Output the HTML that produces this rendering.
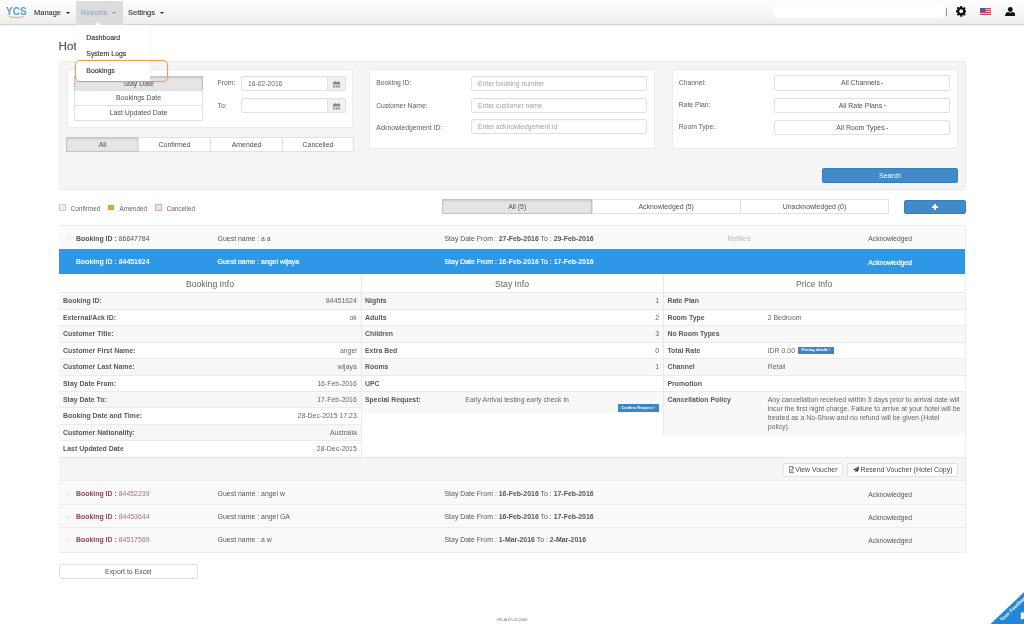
<!DOCTYPE html>
<html lang="en">
<head>
<meta charset="utf-8">
<title>YCS - Hotel Bookings</title>
<style>
*{box-sizing:border-box;margin:0;padding:0}
html,body{width:1024px;height:624px;overflow:hidden;background:#fff}
body{font-family:"Liberation Sans",Arial,sans-serif;font-size:6.93px;color:#555;position:relative;line-height:1.3}
#wrap{position:absolute;left:0;top:0;width:1024px;height:624px;will-change:transform}
.abs{position:absolute}
b{font-weight:bold}
/* NAV */
#nav{position:absolute;left:0;top:0;width:1024px;height:25px;background:linear-gradient(#fefefe,#f9f9f9 40%,#ededed);border-bottom:1px solid #d4d4d4;box-shadow:0 1px 2px rgba(0,0,0,.08)}
#logo{position:absolute;left:6px;top:5.7px;font-size:10px;font-weight:bold;color:#5f9dc4;letter-spacing:.1px;line-height:12px}
#logo svg{position:absolute;left:3px;top:10.2px}
.navi{position:absolute;top:1px;height:24px;font-size:7.47px;color:#333;line-height:23px;white-space:nowrap;-webkit-text-stroke:.1px}
.caret{display:inline-block;width:0;height:0;border-left:2.2px solid transparent;border-right:2.2px solid transparent;border-top:2.4px solid #222;vertical-align:middle;margin-left:5px;position:relative;top:-.5px}
#rep{left:76px;width:46.7px;background:#dcdcdc;color:#8fa6d6;padding-left:5px}
#rep .caret{border-top-color:#6f9fd6}
#srch{position:absolute;left:774px;top:3px;width:169.5px;height:15px;background:#fff;border-radius:1px}
#sep{position:absolute;left:946px;top:8px;width:1px;height:7.5px;background:#999}
/* dropdown */
#dd{position:absolute;left:76px;top:25px;width:73.6px;height:55.5px;background:#fff;box-shadow:0 1px 2px rgba(0,0,0,.06);z-index:5}
#dd div{position:absolute;left:10.3px;font-size:6.93px;color:#333;line-height:9px;-webkit-text-stroke:.12px #333}
#hl{position:absolute;left:75px;top:60.3px;width:92.8px;height:22px;border:1px solid #e8a04a;border-radius:5px;z-index:6;box-shadow:0 0 1.5px rgba(232,160,74,.6)}
#tri{position:absolute;left:94.5px;top:22px;width:0;height:0;border-left:3px solid transparent;border-right:3px solid transparent;border-bottom:3px solid #fff;z-index:6}
h3{position:absolute;left:58.6px;top:38.6px;font-size:11.7px;font-weight:normal;color:#5e5e5e;line-height:14px;white-space:nowrap;-webkit-text-stroke:.25px #5e5e5e}
/* search well */
#well{position:absolute;left:58.5px;top:61.3px;width:907.8px;height:129px;background:#f5f5f5;border:1px solid #ececec;border-radius:2px}
.pan{position:absolute;top:69px;background:#fff;border:1px solid #ececec;border-radius:1.5px}
.btn{position:absolute;background:#fff;border:1px solid #e0e0e0;text-align:center;color:#505050;font-size:6.93px;white-space:nowrap}
.act{background:#e5e5e5;border-color:#c4c4c4;box-shadow:inset 0 1px 2px rgba(0,0,0,.13)}
.lbl{position:absolute;font-size:6.8px;color:#606060;white-space:nowrap;line-height:9px}
.inp{position:absolute;background:#fff;border:1px solid #e0e0e0;border-radius:2px;height:15.2px;font-size:6.72px;line-height:13.4px;padding-left:5.8px;color:#666;white-space:nowrap;box-shadow:inset 0 .5px .5px rgba(0,0,0,.06)}
.ph{color:#a2a2a2}
.addon{position:absolute;background:#f0f0f0;border:1px solid #e0e0e0;border-radius:0 2px 2px 0;width:18.5px;height:15.2px}
.addon svg{position:absolute;left:5.2px;top:3.6px}
.c2{display:inline-block;width:0;height:0;border-left:1.6px solid transparent;border-right:1.6px solid transparent;border-top:1.8px solid #333;vertical-align:middle;margin-left:1.5px}
.pri{background:#428bca;border-color:#357ebd;color:#fff;border-radius:2px}
/* legend */
.lg{position:absolute;top:204.2px;width:7.4px;height:6.5px;border:1px solid #ccc}
.lgt{position:absolute;top:203.7px;font-size:6.45px;color:#666;line-height:9px}
/* list */
#list{position:absolute;left:58.5px;top:225.3px;width:907.3px;height:327.7px;border:1px solid #ececec;background:#fafafa;border-radius:1px}
.row{position:absolute;left:59px;width:906.3px;height:23.4px;background:#fafafa;border-top:1px solid #ebebeb;line-height:9px;white-space:nowrap}
.row span{position:absolute;top:7.9px}
.row .chev{left:8.2px;top:7.5px;color:#dcdcdc;font-size:6.5px}
.row .id{left:17px}
.row .gn{left:158.6px}
.row .sd{left:385.5px}
.row .st{left:809.3px;font-size:6.72px;top:8.5px}
.row b{color:#555}
.red .id b{color:#914257}
.r5 span{margin-top:-.9px}
.red .id{color:#a8707f}
#sel{background:#2e98e6;border-top-color:#2e98e6;color:#fff;height:25.2px}
#sel b{color:#fff}
/* detail */
#det{position:absolute;left:59px;top:274.2px;width:906.3px;height:183.2px;background:#fff}
.hd{position:absolute;top:4.6px;font-size:8.65px;color:#666;line-height:10px;text-align:center}
.tr{position:absolute;height:16.45px;border-top:1px solid #ebebeb;line-height:9px;white-space:nowrap}
.tr.o{background:#f8f8f8}
.tr b{position:absolute;left:4px;top:3px;color:#585858}
.tr i{position:absolute;right:4.2px;top:3px;font-style:normal;color:#666}
.tr u{position:absolute;left:104.3px;top:3px;text-decoration:none;color:#666}
.vl{position:absolute;top:0;width:1px;background:#e9e9e9;z-index:2}
.mini{position:absolute;background:#3c86c6;color:#fff;font-size:3.9px;font-weight:bold;line-height:7.4px;text-align:center;border-radius:.5px;white-space:nowrap}
#foot{position:absolute;left:59px;top:457.4px;width:906.3px;height:23.2px;background:#f5f5f5;border-top:1px solid #e6e6e6}
.vb{top:463px;height:14px;line-height:12.4px;border-radius:2px;border-color:#e2e2e2;color:#484848}
</style>
</head>
<body>
<div id="wrap">

<!-- NAV -->
<div id="nav">
  <div id="logo">YCS<svg width="15" height="3" viewBox="0 0 15 3"><path d="M.5 .5 C4 2.100 10 2.100 14 .6" fill="none" stroke="#e9a23b" stroke-width=".9" stroke-linecap="round"/></svg></div>
  <div class="navi" style="left:34px">Manage<span class="caret"></span></div>
  <div class="navi" id="rep">Reports<span class="caret"></span></div>
  <div class="navi" style="left:128px">Settings<span class="caret"></span></div>
  <div id="srch"></div>
  <div id="sep"></div>
  <svg class="abs" style="left:955.6px;top:6.4px" width="10.4" height="10.4" viewBox="0 0 20 20"><path fill="#111" d="M8.3 0h3.4l.5 2.7 1.7.7L16.200 1.800l2.400 2.400-1.600 2.300.7 1.700 2.700.5v3.400l-2.700.5-.7 1.700 1.600 2.300-2.400 2.400-2.300-1.600-1.700.7-.5 2.700H8.300l-.5-2.700-1.700-.7-2.300 1.600-2.400-2.400 1.600-2.300-.7-1.700L-.4 11.700V8.300l2.700-.5.7-1.700L1.400 3.800 3.800 1.400l2.300 1.600 1.700-.7z"/><circle cx="10" cy="10" r="3.6" fill="#f3f3f3"/></svg>
  <svg class="abs" style="left:980px;top:7.6px" width="11" height="7.2" viewBox="0 0 22 14"><rect width="22" height="14" fill="#e9c9d0"/><g fill="#c2415a"><rect y="0" width="22" height="2"/><rect y="4" width="22" height="2"/><rect y="8" width="22" height="2"/><rect y="12" width="22" height="2"/></g><rect width="11" height="8" fill="#4d5aa6"/></svg>
  <svg class="abs" style="left:1004.6px;top:6.8px" width="10.6" height="9.6" viewBox="0 0 20 18"><circle cx="10" cy="4.6" r="4.6" fill="#111"/><path fill="#111" d="M0 18c0-6 3-8.500 6-8.500 1.200 1 2.500 1.500 4 1.500s2.800-.5 4-1.500c3 0 6 2.500 6 8.500z"/></svg>
</div>
<div id="tri"></div>

<h3>Hotel Bookings</h3>

<!-- SEARCH WELL -->
<div id="well"></div>

<div class="pan" style="left:66.6px;width:286.4px;height:59px"></div>
<div class="btn act" style="left:74.4px;top:75.5px;width:128.4px;height:15.6px;line-height:13.8px">Stay Date</div>
<div class="btn" style="left:74.4px;top:90.4px;width:128.4px;height:15.6px;line-height:13.8px">Bookings Date</div>
<div class="btn" style="left:74.4px;top:105.2px;width:128.4px;height:15.4px;line-height:13.6px">Last Updated Date</div>
<div class="lbl" style="left:217.6px;top:77.9px">From:</div>
<div class="lbl" style="left:217.6px;top:100.5px">To:</div>
<div class="inp" style="left:241.2px;top:76.2px;width:87px;border-radius:2px 0 0 2px">16-02-2016</div>
<div class="addon" style="left:327.2px;top:76.2px"><svg width="7.2" height="7.6" viewBox="0 0 14 15"><path fill="#7a7a7a" d="M0 2.500h14V15H0zM1.200 5.800v8h11.600v-8z"/><path fill="#7a7a7a" d="M3 0h2v4H3zM9 0h2v4H9zM2.500 7.200h2.400v2.400H2.500zM5.800 7.200h2.400v2.400H5.800zM9.100 7.200h2.400v2.400H9.100zM2.500 10.400h2.400v2.400H2.500zM5.800 10.400h2.400v2.400H5.800zM9.100 10.400h2.400v2.400H9.100z"/></svg></div>
<div class="inp" style="left:241.2px;top:98.3px;width:87px;border-radius:2px 0 0 2px"></div>
<div class="addon" style="left:327.2px;top:98.3px"><svg width="7.2" height="7.600" viewBox="0 0 14 15"><path fill="#7a7a7a" d="M0 2.500h14V15H0zM1.200 5.800v8h11.600v-8z"/><path fill="#7a7a7a" d="M3 0h2v4H3zM9 0h2v4H9zM2.500 7.200h2.400v2.400H2.500zM5.800 7.200h2.400v2.400H5.800zM9.100 7.200h2.400v2.400H9.100zM2.500 10.400h2.400v2.400H2.500zM5.800 10.400h2.400v2.400H5.800zM9.100 10.400h2.400v2.400H9.100z"/></svg></div>

<div class="btn act" style="left:66.2px;top:137px;width:72.7px;height:14.8px;line-height:13px">All</div>
<div class="btn" style="left:138.2px;top:137px;width:72.7px;height:14.8px;line-height:13px">Confirmed</div>
<div class="btn" style="left:210.2px;top:137px;width:72.7px;height:14.8px;line-height:13px">Amended</div>
<div class="btn" style="left:282.2px;top:137px;width:71.6px;height:14.8px;line-height:13px">Cancelled</div>

<div class="pan" style="left:368.8px;width:286.5px;height:79.6px"></div>
<div class="lbl" style="left:376.2px;top:78.4px">Booking ID:</div>
<div class="lbl" style="left:376.2px;top:100.5px">Customer Name:</div>
<div class="lbl" style="left:376.2px;top:122.6px">Acknowledgement ID:</div>
<div class="inp ph" style="left:471.3px;top:75.5px;width:176.2px">Enter booking number</div>
<div class="inp ph" style="left:471.3px;top:97.7px;width:176.2px">Enter customer name</div>
<div class="inp ph" style="left:471.3px;top:119.3px;width:176.2px">Enter acknowledgement id</div>

<div class="pan" style="left:671.8px;width:286.2px;height:79.8px"></div>
<div class="lbl" style="left:678.7px;top:78.2px">Channel:</div>
<div class="lbl" style="left:678.7px;top:100.4px">Rate Plan:</div>
<div class="lbl" style="left:678.7px;top:122.4px">Room Type:</div>
<div class="btn" style="left:774px;top:75.4px;width:176.4px;height:15.3px;line-height:13.5px;border-radius:2px">All Channels<span class="c2"></span></div>
<div class="btn" style="left:774px;top:97.7px;width:176.4px;height:15.1px;line-height:13.3px;border-radius:2px">All Rate Plans<span class="c2"></span></div>
<div class="btn" style="left:774px;top:120.1px;width:176.4px;height:15.1px;line-height:13.3px;border-radius:2px">All Room Types<span class="c2"></span></div>

<div class="btn pri" style="left:821.6px;top:167.6px;width:136.8px;height:15.3px;line-height:13.5px">Search</div>

<!-- LEGEND + TABS -->
<div class="lg" style="left:58.7px;background:#ecefec;border-color:#c9cfc9"></div>
<div class="lgt" style="left:70.6px">Confirmed</div>
<div class="lg" style="left:107.7px;width:6.6px;height:5.6px;top:204.6px;background:#eaa43c;border-color:#e29a33"></div>
<div class="lgt" style="left:119.6px">Amended</div>
<div class="lg" style="left:154.5px;background:#f7dfe4;border-color:#e0a9b6"></div>
<div class="lgt" style="left:166.5px">Cancelled</div>

<div class="btn act" style="left:442.2px;top:199.4px;width:150px;height:15px;line-height:14px">All (5)</div>
<div class="btn" style="left:591.6px;top:199.4px;width:149.2px;height:15px;line-height:14px">Acknowledged (5)</div>
<div class="btn" style="left:740.2px;top:199.4px;width:148.6px;height:15px;line-height:14px">Unacknowledged (0)</div>
<div class="btn pri" style="left:904px;top:199.7px;width:61.8px;height:14.6px;line-height:12px;font-size:0"><svg width="6" height="6" viewBox="0 0 6 6" style="position:absolute;left:27.4px;top:3.5px"><path d="M2.100 0h1.800v2.100H6v1.800H3.900V6H2.100V3.900H0V2.100h2.100z" fill="#fff"/></svg></div>

<!-- LIST -->
<div id="list"></div>
<div class="row" style="top:225.8px;border-top:0"><span class="chev">&gt;</span><span class="id"><b>Booking ID :</b> 86647784</span><span class="gn">Guest name : a a</span><span class="sd">Stay Date From : <b>27-Feb-2016</b> To : <b>29-Feb-2016</b></span><span style="left:668.4px;top:8.7px;color:#b9b9b9;font-size:6.93px">Refilled</span><span class="st">Acknowledged</span></div>
<div class="row" id="sel" style="top:249.1px"><span class="chev" style="color:#6a78d8;font-size:4px;top:7px">&#9662;</span><span class="id" style="top:7.3px"><b>Booking ID :</b> <b>84451624</b></span><span class="gn" style="top:7.3px"><b style="font-weight:normal;-webkit-text-stroke:.2px #fff">Guest name : angel wijaya</b></span><span class="sd" style="top:7.3px"><b style="font-weight:normal;-webkit-text-stroke:.2px #fff">Stay Date From : </b><b>16-Feb-2016</b><b style="font-weight:normal;-webkit-text-stroke:.2px #fff"> To : </b><b>17-Feb-2016</b></span><span class="st" style="top:8.1px"><b style="font-weight:normal;-webkit-text-stroke:.2px #fff">Acknowledged</b></span></div>

<div id="det">
  <div class="hd" style="left:0;width:302px">Booking Info</div>
  <div class="hd" style="left:302px;width:302px">Stay Info</div>
  <div class="hd" style="left:604.600px;width:301px">Price Info</div>
  <div class="vl" style="left:302px;height:183px"></div>
  <div class="vl" style="left:604.400px;height:160.8px"></div>

  <!-- Booking info -->
  <div class="tr o" style="left:0;top:18.1px;width:302px"><b>Booking ID:</b><i>84451624</i></div>
  <div class="tr" style="left:0;top:34.55px;width:302px"><b>External/Ack ID:</b><i>ok</i></div>
  <div class="tr o" style="left:0;top:51px;width:302px"><b>Customer Title:</b></div>
  <div class="tr" style="left:0;top:67.45px;width:302px"><b>Customer First Name:</b><i>angel</i></div>
  <div class="tr o" style="left:0;top:83.9px;width:302px"><b>Customer Last Name:</b><i>wijaya</i></div>
  <div class="tr" style="left:0;top:100.35px;width:302px"><b>Stay Date From:</b><i>16-Feb-2016</i></div>
  <div class="tr o" style="left:0;top:116.8px;width:302px"><b>Stay Date To:</b><i>17-Feb-2016</i></div>
  <div class="tr" style="left:0;top:133.25px;width:302px"><b>Booking Date and Time:</b><i>28-Dec-2015 17:23</i></div>
  <div class="tr o" style="left:0;top:149.7px;width:302px"><b>Customer Nationality:</b><i>Australia</i></div>
  <div class="tr" style="left:0;top:166.15px;width:302px;height:17px"><b>Last Updated Date</b><i>28-Dec-2015</i></div>

  <!-- Stay info -->
  <div class="tr o" style="left:302px;top:18.1px;width:302.4px"><b>Nights</b><i>1</i></div>
  <div class="tr" style="left:302px;top:34.55px;width:302.4px"><b>Adults</b><i>2</i></div>
  <div class="tr o" style="left:302px;top:51px;width:302.4px"><b>Children</b><i>3</i></div>
  <div class="tr" style="left:302px;top:67.45px;width:302.4px"><b>Extra Bed</b><i>0</i></div>
  <div class="tr o" style="left:302px;top:83.9px;width:302.4px"><b>Rooms</b><i>1</i></div>
  <div class="tr" style="left:302px;top:100.35px;width:302.4px"><b>UPC</b></div>
  <div class="tr o" style="left:302px;top:116.8px;width:302.4px;height:22px"><b>Special Request:</b><u>Early Arrival testing early check in</u></div>
  <div class="mini" style="left:558.5px;top:129.800px;width:41.5px;height:7.6px">Confirm Request &rsaquo;</div>

  <!-- Price info -->
  <div class="tr o" style="left:604.400px;top:18.1px;width:301.900px"><b>Rate Plan</b></div>
  <div class="tr" style="left:604.400px;top:34.55px;width:301.900px"><b>Room Type</b><u>2 Bedroom</u></div>
  <div class="tr o" style="left:604.400px;top:51px;width:301.900px"><b>No Room Types</b></div>
  <div class="tr" style="left:604.400px;top:67.45px;width:301.900px"><b>Total Rate</b><u>IDR 0.00</u></div>
  <div class="mini" style="left:738.600px;top:73.2px;width:36.6px;height:6.8px;line-height:6.6px">Pricing details &rsaquo;</div>
  <div class="tr o" style="left:604.400px;top:83.9px;width:301.900px"><b>Channel</b><u>Retail</u></div>
  <div class="tr" style="left:604.400px;top:100.35px;width:301.900px"><b>Promotion</b></div>
  <div class="tr o" style="left:604.400px;top:116.8px;width:301.900px;height:43.8px;white-space:normal"><b>Cancellation Policy</b><u style="width:200px;line-height:9px;top:3.3px;white-space:nowrap">Any cancellation received within 3 days prior to arrival date will<br>incur the first night charge. Failure to arrive at your hotel will be<br>treated as a No-Show and no refund will be given (Hotel<br>policy).</u></div>
</div>

<div id="foot"></div>
<div class="btn vb" style="left:782.6px;width:60.8px"><svg width="5.9" height="7" viewBox="0 0 11 13" style="vertical-align:-1.3px;margin-right:.8px"><path d="M.7 .7h6l3.600 3.600v8H.7z" fill="none" stroke="#444" stroke-width="1.3"/><path d="M6.500 .7v3.800h3.800M2.800 7h5.400M2.800 9.500h5.400" fill="none" stroke="#444" stroke-width="1.100"/></svg>View Voucher</div>
<div class="btn vb" style="left:847px;width:111.2px"><svg width="6.6" height="6.600" viewBox="0 0 13 13" style="vertical-align:-1px;margin-right:1.200px"><path fill="#333" d="M13 0 0 7.200l3.600 1.500zM13 0 4.600 9.300V13l2.300-2.800 2.900 1.300z"/></svg>Resend Voucher (Hotel Copy)</div>

<div class="row red" style="top:480.4px"><span class="chev">&gt;</span><span class="id"><b>Booking ID :</b> 84452239</span><span class="gn">Guest name : angel w</span><span class="sd">Stay Date From : <b>16-Feb-2016</b> To : <b>17-Feb-2016</b></span><span class="st">Acknowledged</span></div>
<div class="row red" style="top:503.6px"><span class="chev">&gt;</span><span class="id"><b>Booking ID :</b> 84453644</span><span class="gn">Guest name : angel GA</span><span class="sd">Stay Date From : <b>16-Feb-2016</b> To : <b>17-Feb-2016</b></span><span class="st">Acknowledged</span></div>
<div class="row red r5" style="top:527.2px;height:25.3px"><span class="chev">&gt;</span><span class="id"><b>Booking ID :</b> 84517569</span><span class="gn">Guest name : a w</span><span class="sd">Stay Date From : <b>1-Mar-2016</b> To : <b>2-Mar-2016</b></span><span class="st">Acknowledged</span></div>

<div class="btn" style="left:59px;top:564.2px;width:138.600px;height:14.8px;line-height:13px;border-radius:1.5px">Export to Excel</div>

<div class="abs" style="left:497.3px;top:618.2px;font-size:3.9px;color:#777;line-height:4.6px;white-space:nowrap">HK-AGY-03-2006</div>

<!-- feedback ribbon -->
<svg class="abs" style="left:984px;top:584px" width="40" height="40" viewBox="0 0 40 40"><path d="M6.500 40 40 8.200V40z" fill="#1f87d8"/><text x="0" y="0" transform="translate(18 37.500) rotate(-43.500)" font-family="Liberation Sans, Arial, sans-serif" font-size="5.1" font-weight="bold" fill="#fff">Your Feedback</text><path d="M36.800 28.500h3.200v6.500h-1.800l-1 1.500v-1.500h-.4z" fill="#fff"/></svg>

<!-- REPORTS DROPDOWN -->
<div id="dd">
  <div style="top:8.2px">Dashboard</div>
  <div style="top:24px">System Logs</div>
  <div style="top:40.6px">Bookings</div>
</div>
<div id="hl"></div>

</div>
</body>
</html>
